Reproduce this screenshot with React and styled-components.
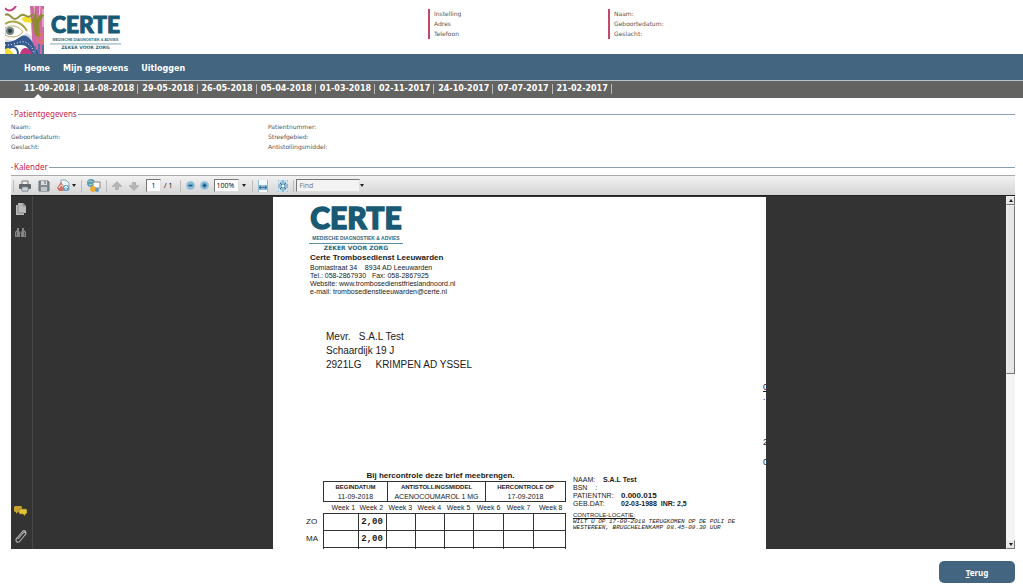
import React from "react";
import styled, { createGlobalStyle } from "styled-components";

const dates = [
  "11-09-2018",
  "14-08-2018",
  "29-05-2018",
  "26-05-2018",
  "05-04-2018",
  "01-03-2018",
  "02-11-2017",
  "24-10-2017",
  "07-07-2017",
  "21-02-2017",
];

const weekWidths = [35, 28, 29, 29, 29, 30, 30, 32];

const doses = [
  { day: "ZO", values: ["", "2,00", "", "", "", "", "", ""] },
  { day: "MA", values: ["", "2,00", "", "", "", "", "", ""] },
];

function CerteLogo({ width }) {
  return (
    <LogoSvg width={width} viewBox="0 0 94 46" role="img" aria-label="Certe">
      <text x="47" y="23" textAnchor="middle" fontFamily="Lato, sans-serif" fontWeight="900" fontSize="30" fill="#185a74" stroke="#185a74" strokeWidth="1.4">
        CERTE
      </text>
      <text x="47" y="34" textAnchor="middle" fontFamily="'Liberation Sans Narrow', 'Liberation Sans', sans-serif" fontWeight="700" fontSize="5" fill="#2c6a82">
        MEDISCHE DIAGNOSTIEK &amp; ADVIES
      </text>
      <path d="M0 37.5H94" stroke="#5b8fa3" strokeWidth="1" />
      <text x="47" y="44" textAnchor="middle" fontFamily="'DejaVu Sans', sans-serif" fontWeight="700" fontSize="6" fill="#2c6a82">
        ZEKER VOOR ZORG
      </text>
    </LogoSvg>
  );
}

function Artwork() {
  return (
    <svg width="40" height="48" viewBox="0 0 40 48" aria-hidden="true">
      <rect width="40" height="48" fill="#fffdf8" />
      <path d="M0 2C3 6 8 5 11 0" fill="none" stroke="#c2418c" strokeWidth="2" />
      <path d="M25 0h14v48H28z" fill="#d06aa5" />
      <path d="M29 0l2 14M35 0l-1 15M38 3v18" stroke="#f6dcec" strokeWidth="1" />
      <path d="M16 12l9-2 2 7-8-1z" fill="#f2e12d" />
      <path d="M0 9c5-3 6 4 10 4s5-6 9-4 5 3 9-1" fill="none" stroke="#8f9140" strokeWidth="2" />
      <path d="M29 1c2 7 0 9-2 13l3 15 5 3-1-15 5-8-4-1-3 5-1-8z" fill="#8d8a2f" />
      <path d="M0 18c8-5 17-2 22 7" fill="none" stroke="#a8a64e" strokeWidth="2" />
      <path d="M0 22c7-4 14-2 18 4-5 6-12 6-18 3z" fill="#fff" stroke="#b6a96b" strokeWidth="1" />
      <circle cx="5" cy="25" r="4" fill="#6f837f" />
      <circle cx="5" cy="25" r="2" fill="#263c48" />
      <path d="M0 33c8 3 15 1 21-6l6 3v9L11 36 0 38z" fill="#d7dce7" />
      <path d="M0 36c7 0 11-2 15-5s8-1 11 3 3 7 7 11v3h-8c-1-6-4-9-9-9s-10 1-16 5z" fill="#365b91" />
      <path d="M0 39c10 1 16-6 22-2s5 5 7 11" fill="none" stroke="#fff" strokeWidth="1" strokeDasharray="1 2" />
      <path d="M3 42l6 6H0v-5z" fill="#f2e12d" />
      <path d="M15 48c1-6 7-10 13 0z" fill="#bf397f" />
      <path d="M4 42c6-3 9 1 9 6" fill="none" stroke="#365b91" strokeWidth="2" />
      <path d="M34 27c4 2 1 7 4 8s-4 4-5-1 4-4 5-7" fill="none" stroke="#ed813d" strokeWidth="1" />
      <path d="M30 40v8M34 38v10M38 39v9" stroke="#5571a5" strokeWidth="2" />
    </svg>
  );
}

function PrintIcon() {
  return (
    <svg width="12" height="12" viewBox="0 0 12 12" aria-hidden="true">
      <path d="M3 1h6v4H3z" fill="#eee" stroke="#777" />
      <rect x="0" y="4" width="12" height="5" rx="1" fill="#60666a" />
      <path d="M3 7h6v4H3z" fill="#fff" stroke="#747a7d" />
      <path d="M4 9h4" stroke="#79b3c9" />
    </svg>
  );
}

function SaveIcon() {
  return (
    <svg width="12" height="12" viewBox="0 0 12 12" aria-hidden="true">
      <path d="M1 1h9l1 1v9H1z" fill="#858b90" stroke="#686e72" />
      <path d="M3 1h6v4H3z" fill="#d7dcdf" />
      <path d="M7 1v3" stroke="#666" />
      <path d="M3 7h6v4H3z" fill="#c1c6c9" />
    </svg>
  );
}

function ShareIcon() {
  return (
    <svg width="13" height="13" viewBox="0 0 13 13" aria-hidden="true">
      <path d="M4 1h5l3 3v7H4z" fill="#edf6fb" stroke="#87a9bc" />
      <path d="M0 9l4-6 4 6-2 3H2z" fill="#cb7468" />
      <path d="M2 9c2-4 3-4 5 1" fill="none" stroke="#fff" />
      <circle cx="9" cy="9" r="3" fill="#5a9cc4" />
      <path d="M9 11V7M7 9l2-2 2 2" fill="none" stroke="#fff" />
    </svg>
  );
}

function CollaborateIcon() {
  return (
    <svg width="14" height="14" viewBox="0 0 14 14" aria-hidden="true">
      <circle cx="4" cy="4" r="4" fill="#579bc5" />
      <path d="M1 3c3-3 4 1 6 0M2 6l4-1" fill="none" stroke="#b9db92" />
      <path d="M6 3h7v6H6z" fill="#f7f7f3" stroke="#888" />
      <circle cx="6" cy="10" r="3" fill="#e9ad35" />
      <circle cx="10" cy="11" r="2" fill="#5d9ac2" />
    </svg>
  );
}

function ArrowIcon({ down }) {
  return (
    <svg width="10" height="10" viewBox="0 0 10 10" aria-hidden="true">
      <path d={down ? "M3 1h4v3h3v1L5 10 0 5V4h3z" : "M3 9h4V6h3V5L5 0 0 5v1h3z"} fill="#b5b5b5" />
    </svg>
  );
}

function ZoomIcon({ plus }) {
  return (
    <svg width="9" height="9" viewBox="0 0 9 9" aria-hidden="true">
      <circle cx="4.5" cy="4.5" r="4" fill="#83bbdf" stroke="#a5c2d3" />
      <path d={plus ? "M2.5 4.5h4M4.5 2.5v4" : "M2.5 4.5h4"} stroke="#1b517a" strokeWidth="1.6" />
    </svg>
  );
}

function FitIcon({ page }) {
  return (
    <svg width="10" height="12" viewBox="0 0 10 12" aria-hidden="true">
      <rect width="10" height="12" fill="#8ebbd5" />
      {page ? (
        <>
          <path d="M1 4V1h3M6 1h3v3M9 8v3H6M4 11H1V8" fill="none" stroke="#fff" />
          <path d="M2 3l2 2M8 3L6 5M2 9l2-2M8 9L6 7" stroke="#3e7597" />
          <rect x="4" y="5" width="2" height="2" fill="#fff" />
        </>
      ) : (
        <>
          <path d="M1 0h8v5H1zM1 10h8v2H1z" fill="#f5fafc" />
          <path d="M1 7.5h8M3 6L1 7.5 3 9M7 6l2 1.5L7 9" fill="none" stroke="#3e7597" />
        </>
      )}
    </svg>
  );
}

function CaretIcon({ up }) {
  return (
    <svg width="4" height="3" viewBox="0 0 4 3" aria-hidden="true">
      <path d={up ? "M0 3h4L2 0z" : "M0 0h4L2 3z"} fill="#222" />
    </svg>
  );
}

export default function App() {
  return (
    <>
      <GlobalStyle />
      <Page>
        <Header>
          <Brand>
            <Artwork />
            <CerteLogo width={71} />
          </Brand>
          <HeaderInfo>
            <span>Instelling</span>
            <span>Adres</span>
            <span>Telefoon</span>
          </HeaderInfo>
          <HeaderInfo>
            <span>Naam:</span>
            <span>Geboortedatum:</span>
            <span>Geslacht:</span>
          </HeaderInfo>
        </Header>
        <MainNav>
          <NavLink href="#home">Home</NavLink>
          <NavLink href="#gegevens">Mijn gegevens</NavLink>
          <NavLink href="#uitloggen">Uitloggen</NavLink>
        </MainNav>
        <DateNav>
          {dates.map((date, i) => (
            <DateLink key={date} href={`#${date}`} $active={i === 0}>
              {date}
            </DateLink>
          ))}
        </DateNav>
        <Content>
          <SectionTitle>Patientgegevens</SectionTitle>
          <PatientInfo>
            <InfoColumn>
              <span>Naam:</span>
              <span>Geboortedatum:</span>
              <span>Geslacht:</span>
            </InfoColumn>
            <InfoColumn>
              <span>Patientnummer:</span>
              <span>Streefgebied:</span>
              <span>Antistollingsmiddel:</span>
            </InfoColumn>
          </PatientInfo>
          <SectionTitle>Kalender</SectionTitle>
          <Viewer>
            <Toolbar>
              <Separator />
              <ToolGroup $gap={7}>
                <IconButton aria-label="Print"><PrintIcon /></IconButton>
                <IconButton aria-label="Save"><SaveIcon /></IconButton>
                <IconButton aria-label="Share"><ShareIcon /><CaretIcon /></IconButton>
              </ToolGroup>
              <Separator />
              <IconButton aria-label="Collaborate"><CollaborateIcon /></IconButton>
              <Separator />
              <ToolGroup $gap={7}>
                <IconButton aria-label="Previous page"><ArrowIcon /></IconButton>
                <IconButton aria-label="Next page"><ArrowIcon down /></IconButton>
                <PageField>
                  <PageInput aria-label="Page" defaultValue="1" />
                  / 1
                </PageField>
              </ToolGroup>
              <Separator />
              <ToolGroup $gap={5}>
                <IconButton aria-label="Zoom out"><ZoomIcon /></IconButton>
                <IconButton aria-label="Zoom in"><ZoomIcon plus /></IconButton>
                <PageField>
                  <ZoomSelect aria-label="Zoom" defaultValue="100%">
                    <option>100%</option>
                  </ZoomSelect>
                  <CaretIcon />
                </PageField>
              </ToolGroup>
              <Separator />
              <ToolGroup $gap={10}>
                <IconButton aria-label="Fit width"><FitIcon /></IconButton>
                <IconButton aria-label="Fit page"><FitIcon page /></IconButton>
              </ToolGroup>
              <Separator />
              <FindInput aria-label="Find" placeholder="Find" />
              <IconButton aria-label="Find options"><CaretIcon /></IconButton>
            </Toolbar>
            <ViewerBody>
              <SideBar>
                <IconButton aria-label="Pages">
                  <svg width="10" height="12" viewBox="0 0 10 12" aria-hidden="true">
                    <path d="M0 2h2V0h5l3 3v7H8v2H0z" fill="#b9b9b9" />
                    <path d="M2 2v8h6M7 0v3h3" fill="none" stroke="#858585" />
                  </svg>
                </IconButton>
                <IconButton aria-label="Search">
                  <svg width="11" height="10" viewBox="0 0 11 10" aria-hidden="true">
                    <path d="M2 0h2v3l1 1v5H0V4l2-2zM7 0h2v2l2 2v5H6V4l1-1z" fill="#858585" />
                    <path d="M4 5h3" stroke="#707070" />
                    <path d="M1.5 4v4M9.5 4v4" stroke="#565656" />
                  </svg>
                </IconButton>
                <Spacer />
                <IconButton aria-label="Comments">
                  <svg width="13" height="11" viewBox="0 0 13 11" aria-hidden="true">
                    <path d="M1 0h6l1 1v4L7 6H4L2 8V6H1L0 5V1z" fill="#c5a02b" />
                    <path d="M6 3h6l1 1v3l-1 1h-1v2L9 8H6L5 7V4z" fill="#e2c13d" stroke="#8d721e" strokeWidth=".6" />
                  </svg>
                </IconButton>
                <IconButton aria-label="Attachments">
                  <svg width="12" height="13" viewBox="0 0 12 13" aria-hidden="true">
                    <path d="M3 9l5-6c2-2 4 0 2 2l-5 6c-2 3-6 0-3-3l5-6c1-2 4-2 4 1" fill="none" stroke="#b4b4b4" strokeWidth="1.1" />
                  </svg>
                </IconButton>
              </SideBar>
              <Canvas>
                <Letter>
                  <LetterHead>
                    <CerteLogo width={94} />
                    <Sender>
                      <strong>Certe Trombosedienst Leeuwarden</strong>
                      <span>{"Bomiastraat 34    8934 AD Leeuwarden"}</span>
                      <span>{"Tel.: 058-2867930   Fax: 058-2867925"}</span>
                      <span>Website: www.trombosedienstfrieslandnoord.nl</span>
                      <span>e-mail: trombosedienstleeuwarden@certe.nl</span>
                    </Sender>
                  </LetterHead>
                  <AddressRow>
                    <Address>
                      <span>{"Mevr.   S.A.L Test"}</span>
                      <span>Schaardijk 19 J</span>
                      <span>{"2921LG     KRIMPEN AD YSSEL"}</span>
                    </Address>
                    <CutColumn>
                      <u>0</u>
                      <span>.</span>
                      <Gap $size={35} />
                      <span>2</span>
                      <Gap $size={10} />
                      <span>0</span>
                    </CutColumn>
                  </AddressRow>
                  <LetterBottom>
                    <div>
                      <Notice>Bij hercontrole deze brief meebrengen.</Notice>
                      <SummaryTable>
                        <colgroup>
                          <col width="64" />
                          <col width="98" />
                          <col width="80" />
                        </colgroup>
                        <thead>
                          <tr>
                            <th>BEGINDATUM</th>
                            <th>ANTISTOLLINGSMIDDEL</th>
                            <th>HERCONTROLE OP</th>
                          </tr>
                        </thead>
                        <tbody>
                          <tr>
                            <td>11-09-2018</td>
                            <td>ACENOCOUMAROL 1 MG</td>
                            <td>17-09-2018</td>
                          </tr>
                        </tbody>
                      </SummaryTable>
                      <WeekTable>
                        <colgroup>
                          <col width="17" />
                          {weekWidths.map((w, i) => (
                            <col key={i} width={w} />
                          ))}
                        </colgroup>
                        <thead>
                          <tr>
                            <td />
                            {weekWidths.map((w, i) => (
                              <WeekHead key={i}>Week {i + 1}</WeekHead>
                            ))}
                          </tr>
                        </thead>
                        <tbody>
                          {doses.map((row) => (
                            <tr key={row.day}>
                              <DayHead scope="row">{row.day}</DayHead>
                              {row.values.map((value, i) => (
                                <DoseCell key={i}>{value}</DoseCell>
                              ))}
                            </tr>
                          ))}
                          <tr>
                            <DayHead />
                            {weekWidths.map((w, i) => (
                              <DoseCell key={i}>&nbsp;</DoseCell>
                            ))}
                          </tr>
                        </tbody>
                      </WeekTable>
                    </div>
                    <PatientBlock>
                      <Facts>
                        <Fact $label={30}>
                          <dt>NAAM:</dt>
                          <dd>S.A.L Test</dd>
                        </Fact>
                        <Fact $label={48}>
                          <dt>{"BSN    :"}</dt>
                          <dd />
                        </Fact>
                        <Fact $label={48} $big>
                          <dt>PATIENTNR:</dt>
                          <dd>0.000.015</dd>
                        </Fact>
                        <Fact $label={48}>
                          <dt>GEB.DAT:</dt>
                          <dd>{"02-03-1988  INR: 2,5"}</dd>
                        </Fact>
                      </Facts>
                      <LocationTitle>CONTROLE-LOCATIE:</LocationTitle>
                      <LocationText>
                        WILT U OP 17-09-2018 TERUGKOMEN OP DE POLI DE
                        <br />
                        WESTEREEN, BRUGCHELENKAMP 08.45-09.30 UUR
                      </LocationText>
                    </PatientBlock>
                  </LetterBottom>
                </Letter>
              </Canvas>
              <ScrollBar>
                <ScrollButton aria-label="Scroll up"><CaretIcon up /></ScrollButton>
                <ScrollThumb />
                <ScrollTrack />
                <ScrollButton aria-label="Scroll down"><CaretIcon /></ScrollButton>
              </ScrollBar>
            </ViewerBody>
          </Viewer>
        </Content>
        <Footer>
          <BackButton>
            <u>T</u>erug
          </BackButton>
        </Footer>
      </Page>
    </>
  );
}

const GlobalStyle = createGlobalStyle`
  * {
    box-sizing: border-box;
  }

  body {
    margin: 0;
    background: #fff;
    font-family: "DejaVu Sans", Verdana, sans-serif;
  }
`;

const Page = styled.div`
  display: flex;
  flex-direction: column;
  height: 100vh;
  min-height: 400px;
`;

const Header = styled.header`
  display: grid;
  grid-template-columns: 1fr 180px 415px;
  align-items: start;
  height: 54px;
  flex-shrink: 0;
`;

const Brand = styled.div`
  display: flex;
  gap: 5px;
  padding: 6px 0 0 5px;
`;

const LogoSvg = styled.svg`
  display: block;
  margin-top: 6px;
`;

const HeaderInfo = styled.div`
  display: flex;
  flex-direction: column;
  margin-top: 9px;
  padding-left: 4px;
  border-left: 2px solid #c4486a;
  color: #555;
  font-size: 6px;
  line-height: 10px;
`;

const MainNav = styled.nav`
  display: flex;
  align-items: center;
  gap: 13px;
  height: 26px;
  flex-shrink: 0;
  padding: 3px 24px 0;
  background: #43657f;
`;

const NavLink = styled.a`
  color: #fff;
  font-size: 8px;
  font-weight: bold;
  text-decoration: none;
`;

const DateNav = styled.nav`
  display: flex;
  align-items: flex-start;
  gap: 4px;
  height: 18px;
  flex-shrink: 0;
  padding: 3px 24px 0;
  border-top: 1px solid #b4c4cf;
  background: #636361;
`;

const DateLink = styled.a`
  position: relative;
  padding-right: 3px;
  border-right: 1px solid #bbb;
  color: #fff;
  font-size: 8px;
  font-weight: bold;
  line-height: 10px;
  text-decoration: none;

  &::after {
    content: "";
    display: ${(props) => (props.$active ? "block" : "none")};
    position: absolute;
    left: 10px;
    bottom: -4px;
    border: 4px solid transparent;
    border-top-width: 0;
    border-bottom-color: #fff;
  }
`;

const Content = styled.main`
  display: flex;
  flex-direction: column;
  flex: 1;
  min-height: 0;
  padding: 10px 8px 0 11px;
`;

const SectionTitle = styled.h2`
  display: flex;
  align-items: center;
  gap: 1px;
  margin: 0;
  color: #c41e4a;
  font-family: "Noto Sans", sans-serif;
  font-size: 8px;
  font-weight: normal;
  line-height: 12px;

  &::before,
  &::after {
    content: "";
    width: 2px;
    height: 1px;
    background: #8ba0ac;
  }

  &::after {
    flex: 1;
  }
`;

const PatientInfo = styled.div`
  display: grid;
  grid-template-columns: 257px 1fr;
  padding: 2px 0 9px;
`;

const InfoColumn = styled.div`
  display: flex;
  flex-direction: column;
  color: #555;
  font-size: 6px;
  line-height: 10px;
`;

const Viewer = styled.section`
  display: flex;
  flex-direction: column;
  flex: 1;
  min-height: 0;
  margin-top: 2px;
`;

const Toolbar = styled.div`
  display: flex;
  align-items: center;
  height: 20px;
  flex-shrink: 0;
  border-top: 1px solid #aaa;
  background: linear-gradient(#f2f2f2, #d4d4d4);
  font-family: "Open Sans", sans-serif;
  font-size: 7px;
`;

const ToolGroup = styled.div`
  display: flex;
  align-items: center;
  gap: ${(props) => props.$gap}px;
`;

const Separator = styled.div`
  width: 1px;
  height: 12px;
  margin: 0 5px;
  background: #bdbdbd;

  &:first-child {
    margin-left: 2px;
  }

  &:nth-last-child(3) {
    margin-right: 2px;
  }
`;

const IconButton = styled.button`
  display: flex;
  align-items: center;
  gap: 2px;
  padding: 0;
  border: 0;
  background: none;
`;

const PageField = styled.div`
  display: flex;
  align-items: center;
  gap: 3px;
  padding-right: 1px;
  white-space: pre;

  &:has(input) {
    padding-right: 3px;
  }
`;

const PageInput = styled.input`
  width: 15px;
  height: 13px;
  padding: 0;
  border: 1px solid #ddd;
  border-top-color: #777;
  border-left-color: #777;
  font: inherit;
  text-align: center;
`;

const ZoomSelect = styled.select`
  appearance: none;
  width: 25px;
  height: 13px;
  padding: 0 1px;
  border: 1px solid #ddd;
  border-top-color: #777;
  border-left-color: #777;
  border-radius: 0;
  background: #fff;
  font: inherit;
`;

const FindInput = styled.input`
  width: 64px;
  height: 13px;
  padding: 0 2px;
  border: 1px solid #ddd;
  border-top-color: #777;
  border-left-color: #777;
  background: #f3f3f3;
  font: inherit;

  &::placeholder {
    color: #777;
  }
`;

const ViewerBody = styled.div`
  display: flex;
  flex: 1;
  min-height: 0;
  border-top: 1px solid #222;
  background: #333;
`;

const SideBar = styled.aside`
  display: flex;
  flex-direction: column;
  align-items: center;
  gap: 13px;
  width: 22px;
  padding: 7px 2px 6px 0;
  border-right: 1px solid #484848;
`;

const Spacer = styled.div`
  flex: 1;
`;

const Canvas = styled.div`
  display: flex;
  flex: 1;
  justify-content: center;
  padding-top: 1px;
  overflow: hidden;
`;

const Letter = styled.article`
  width: 493px;
  height: 697px;
  flex-shrink: 0;
  padding-left: 33px;
  background: #fff;
  color: #1a1a1a;
  font-family: "Liberation Sans", Arial, sans-serif;
  overflow: hidden;
`;

const LetterHead = styled.div`
  padding: 3px 0 0 3px;
`;

const Sender = styled.div`
  display: flex;
  flex-direction: column;
  padding: 2px 0 0 1px;
  font-size: 7px;
  line-height: 8px;
  white-space: pre;

  strong {
    margin-bottom: 2px;
    font-size: 8px;
  }
`;

const AddressRow = styled.div`
  display: flex;
  justify-content: space-between;
  height: 175px;
  padding-top: 34px;
`;

const Address = styled.address`
  display: flex;
  flex-direction: column;
  padding-left: 20px;
  font-size: 10px;
  font-style: normal;
  line-height: 14px;
  white-space: pre;
`;

const CutColumn = styled.div`
  display: flex;
  flex-direction: column;
  width: 3px;
  padding-top: 52px;
  overflow: hidden;
  font-size: 9px;
  line-height: 10px;
`;

const Gap = styled.div`
  height: ${(props) => props.$size}px;
`;

const LetterBottom = styled.div`
  display: flex;
  gap: 7px;
`;

const Notice = styled.p`
  margin: 0 0 0 9px;
  font-size: 8px;
  font-weight: bold;
  line-height: 10px;
  text-align: center;
`;

const SummaryTable = styled.table`
  width: 243px;
  margin-left: 17px;
  border: 1px solid #333;
  border-collapse: collapse;
  table-layout: fixed;
  text-align: center;

  th {
    padding: 1px 0 0;
    border-left: 1px solid #333;
    font-size: 6px;
    line-height: 9px;
  }

  td {
    padding: 0;
    border-left: 1px solid #333;
    font-size: 7px;
    line-height: 9px;
    white-space: nowrap;
  }
`;

const WeekTable = styled.table`
  width: 260px;
  margin-top: 1px;
  border-collapse: collapse;
  table-layout: fixed;

  td {
    padding: 0;
  }
`;

const WeekHead = styled.th`
  padding: 0 3px 0 0;
  font-size: 7px;
  font-weight: normal;
  line-height: 10px;
  text-align: right;
  white-space: nowrap;
`;

const DayHead = styled.th`
  padding: 0;
  font-size: 8px;
  font-weight: normal;
  line-height: 16px;
  text-align: left;
`;

const DoseCell = styled.td`
  border: 1px solid #333;
  font-family: "Liberation Mono", monospace;
  font-size: 9px;
  font-weight: bold;
  line-height: 16px;
  text-align: center;
`;

const PatientBlock = styled.div`
  padding-top: 5px;
`;

const Facts = styled.dl`
  display: flex;
  flex-direction: column;
  margin: 0 0 3px;
  font-size: 7px;
  line-height: 8px;
  white-space: pre;
`;

const Fact = styled.div`
  display: grid;
  grid-template-columns: ${(props) => props.$label}px 1fr;

  dd {
    margin: 0;
    font-size: ${(props) => (props.$big ? 8 : 7)}px;
    font-weight: bold;
  }
`;

const LocationTitle = styled.p`
  margin: 0;
  font-size: 6px;
  line-height: 8px;
  text-decoration: underline;
`;

const LocationText = styled.p`
  margin: 0;
  font-family: "Liberation Mono", monospace;
  font-size: 6px;
  font-style: italic;
  line-height: 6px;
`;

const ScrollBar = styled.div`
  display: flex;
  flex-direction: column;
  width: 9px;
  background: #f4f4f4;
`;

const ScrollButton = styled.button`
  display: flex;
  align-items: center;
  justify-content: center;
  width: 9px;
  height: 9px;
  padding: 0;
  border: 1px solid #eee;
  border-right-color: #777;
  border-bottom-color: #777;
  background: #e6e6e6;
`;

const ScrollThumb = styled.div`
  flex: 1;
  border: 1px solid #eee;
  border-right-color: #777;
  border-bottom-color: #777;
  background: #e6e6e6;
`;

const ScrollTrack = styled.div`
  flex: 1;
`;

const Footer = styled.footer`
  display: flex;
  justify-content: flex-end;
  flex-shrink: 0;
  padding: 12px 8px 5px;
`;

const BackButton = styled.button`
  width: 76px;
  height: 22px;
  border: 0;
  border-radius: 5px;
  background: #43657f;
  color: #fff;
  font-family: "Noto Sans", sans-serif;
  font-size: 8px;
  font-weight: bold;
`;
